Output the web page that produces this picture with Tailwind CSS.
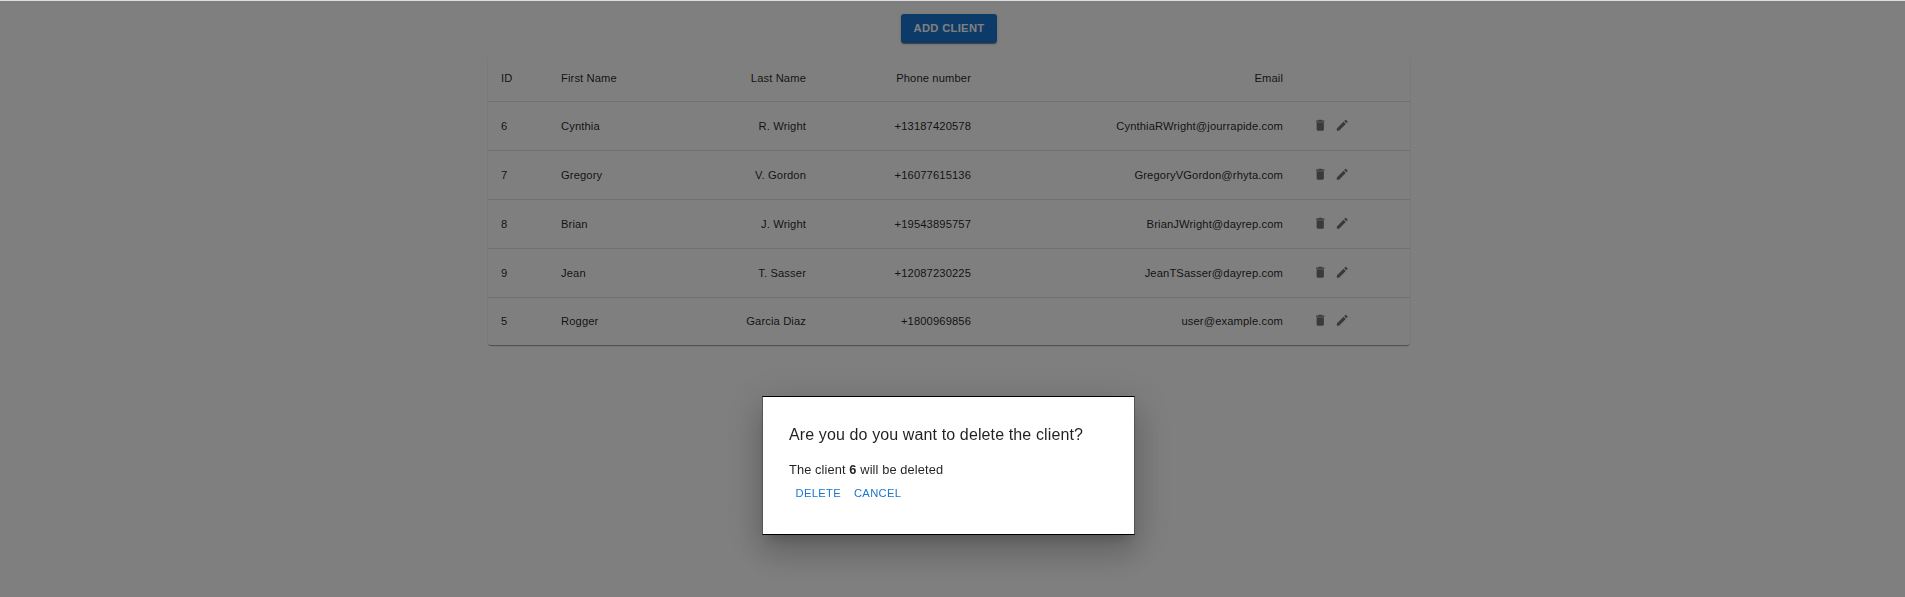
<!DOCTYPE html>
<html lang="en">
<head>
<meta charset="utf-8">
<title>Clients</title>
<script src="https://cdn.jsdelivr.net/npm/@tailwindcss/browser@4"></script>
</head>
<body class="bg-white font-['Liberation_Sans',Arial,sans-serif] text-black/87 h-[597px] overflow-hidden">
<svg class="hidden">
  <symbol id="trash" viewBox="0 0 24 24"><path d="M6 19c0 1.1.9 2 2 2h8c1.100 0 2-.9 2-2V7H6v12zM19 4h-3.500l-1-1h-5l-1 1H5v2h14V4z"/></symbol>
  <symbol id="pencil" viewBox="0 0 24 24"><path d="M3 17.250V21h3.750L17.810 9.940l-3.750-3.750L3 17.250zM20.710 7.040c.39-.39.39-1.020 0-1.410l-2.340-2.340a.9959.9959 0 0 0-1.410 0l-1.830 1.830 3.750 3.750 1.830-1.830z"/></symbol>
</svg>
<main class="flex flex-col items-center pt-[14px]">
  <button class="h-[29px] w-24 -ml-[7px] rounded-[3px] bg-[#1976d2] text-white text-[11.2px] font-bold leading-[29px] tracking-[0.32px] shadow-[0_2px_1px_-1px_rgba(0,0,0,0.3),0_1px_1px_rgba(0,0,0,0.25),0_1px_4px_rgba(0,0,0,0.12)]">ADD CLIENT</button>
  <section id="clients" class="mt-[13px] w-[922px] -ml-[7px] rounded-[3px] text-[11.2px] leading-4 tracking-[0.12px] shadow-[0_2px_1px_-1px_rgba(0,0,0,0.2),0_1px_1px_rgba(0,0,0,0.14),0_1px_2px_rgba(0,0,0,0.12)]">
    <div class="grid grid-cols-[60px_145px_126px_165px_312px_1fr] items-center h-[46px] pb-[2px] border-b border-[#e0e0e0] *:px-[13px]">
      <div>ID</div><div>First Name</div><div class="text-right">Last Name</div><div class="text-right">Phone number</div><div class="text-right">Email</div><div></div>
    </div>
  </section>
</main>
<div class="fixed inset-x-0 top-px bottom-0 bg-black/50"></div>
<div class="fixed inset-x-0 top-0 h-px bg-[#dcdfde]"></div>
<div role="dialog" class="fixed left-[762px] top-[396px] w-[373px] h-[139px] bg-white border-black border border-x-[#555] px-[26px] pt-[27px] shadow-[0_9px_12px_-6px_rgba(0,0,0,0.2),0_19px_30px_2px_rgba(0,0,0,0.14),0_7px_37px_6px_rgba(0,0,0,0.12)]">
  <h2 class="text-base leading-[22px] tracking-[0.12px]">Are you do you want to delete the client?</h2>
  <p class="mt-[14px] text-[12.8px] leading-[19px] tracking-[0.12px]">The client <b>6</b> will be deleted</p>
  <div class="flex text-[11.2px] leading-5 tracking-[0.32px] text-[#1976d2] gap-[13px] pl-[6.500px] mt-[4px]"><button>DELETE</button><button>CANCEL</button></div>
</div>
<script>
const rows = [
  ['6','Cynthia','R. Wright','+13187420578','CynthiaRWright@jourrapide.com'],
  ['7','Gregory','V. Gordon','+16077615136','GregoryVGordon@rhyta.com'],
  ['8','Brian','J. Wright','+19543895757','BrianJWright@dayrep.com'],
  ['9','Jean','T. Sasser','+12087230225','JeanTSasser@dayrep.com'],
  ['5','Rogger','Garcia Diaz','+1800969856','user@example.com']
];
document.getElementById('clients').insertAdjacentHTML('beforeend', rows.map(r => `
  <div class="grid grid-cols-[60px_145px_126px_165px_312px_1fr] items-center h-[49px] last:h-[47px] last:pb-px border-b last:border-b-0 border-[#e0e0e0] *:px-[13px]">
    <div>${r[0]}</div><div>${r[1]}</div><div class="text-right">${r[2]}</div><div class="text-right">${r[3]}</div><div class="text-right">${r[4]}</div>
    <div class="flex gap-[7px] pl-[17px]! pb-[2px] fill-[#757575]"><svg class="size-[14.500px]"><use href="#trash"/></svg><svg class="size-[14.500px]"><use href="#pencil"/></svg></div>
  </div>`).join(''));
</script>
</body>
</html>
